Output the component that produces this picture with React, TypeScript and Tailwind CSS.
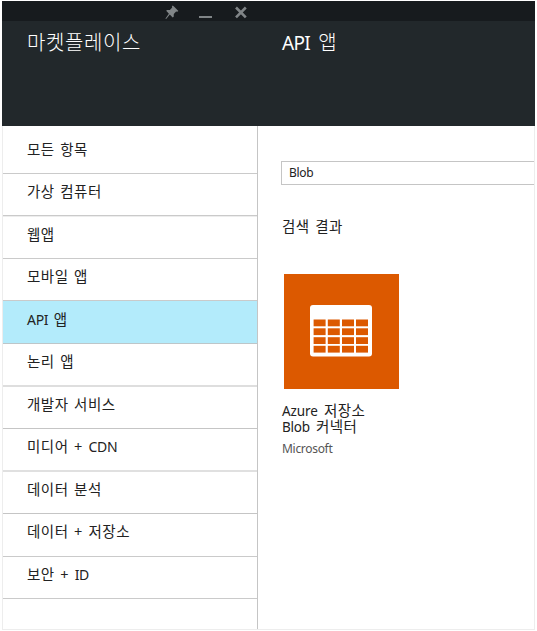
type MenuRow = { label: string; latin?: string; tail?: string; row: string };

const menu: MenuRow[] = [
  { label: '모든 항목', row: 'h-[48px] pt-[13px] border-b-[#cacaca]' },
  { label: '가상 컴퓨터', row: 'h-[42px] pt-[7px] border-b-[#cacaca]' },
  { label: '웹앱', row: 'h-[43px] pt-[7px] border-t border-t-[#ededed] border-b-[#cacaca]' },
  { label: '모바일 앱', row: 'h-[42px] pt-[7px] border-b-[#cacaca]' },
  { label: '', latin: 'API', tail: ' 앱', row: 'h-[43px] pt-[8px] bg-[#b3ebfb] border-b-[#bdc6c9]' },
  { label: '논리 앱', row: 'h-[42px] pt-[7px] border-b-[#dedede]' },
  { label: '개발자 서비스', row: 'h-[43px] pt-[7px] border-t border-t-[#dedede] border-b-[#c5c5c5]' },
  { label: '미디어 + ', latin: 'CDN', row: 'h-[42px] pt-[7px] border-b-[#e0e0e0]' },
  { label: '데이터 분석', row: 'h-[43px] pt-[7px] border-t border-t-[#e0e0e0] border-b-[#c5c5c5]' },
  { label: '데이터 + 저장소', row: 'h-[43px] pt-[7px] border-b-[#cacaca]' },
  { label: '보안 + ', latin: 'ID', row: 'h-[42px] pt-[7px] border-b-[#cacaca]' },
];

function WindowControls() {
  return (
    <div className="flex h-[20px] bg-[#171b1e] pl-[163px] text-[#808587]">
      <svg width="16" height="18" viewBox="0 0 16 18" fill="currentColor">
        <path d="M9.6 5 13.8 9.3 12.6 10 11.5 9.8 9.2 12.1 9.1 14.9 8.1 15.6 5.2 12.8 1.8 17 .7 17 4.3 12 1.6 9 2.4 8.2 5.3 8.1 7.6 5.8 7.3 4.7 8.1 3.7Z" transform="translate(-.4 .8)" />
      </svg>
      <svg className="ml-[18px]" width="13" height="18" viewBox="0 0 13 18">
        <path d="M0 15h13v2H0z" fill="currentColor" />
      </svg>
      <svg className="ml-[23px]" width="12" height="18" viewBox="0 0 12 18">
        <path d="M1 6.5 10.8 16.3M10.8 6.5 1 16.3" stroke="currentColor" strokeWidth="2.6" />
      </svg>
    </div>
  );
}

function TableIcon() {
  return (
    <svg className="mr-[2px] mb-[1px]" width="62" height="52" viewBox="0 0 62 52">
      <rect width="62" height="51.5" rx="3" fill="#fff" />
      {[14.5, 23.3, 32.2, 40.8].map((y) =>
        [3.6, 17.8, 32, 46].map((x) => (
          <rect key={`${x}-${y}`} x={x} y={y} width="12" height="6.8" fill="#dc5900" />
        )),
      )}
    </svg>
  );
}

export default function App() {
  return (
    <div className="h-[631px] w-[537px] bg-white pl-[2px] pt-px font-['Noto_Sans','Noto_Sans_CJK_KR',sans-serif] text-[#222]">
      <div className="flex h-[629px] w-[533px] flex-col">
        <header className="h-[125px] shrink-0 bg-[#22282b] text-white">
          <WindowControls />
          <div className="flex pt-[7px] text-[20px] leading-[30px] font-light">
            <h1 className="w-[254px] pl-[25px] tracking-[0.6px]">마켓플레이스</h1>
            <h2 className="pl-[26px] [word-spacing:3px]">
              <span className="text-[19px] font-normal tracking-[-0.7px]">API</span> 앱
            </h2>
          </div>
        </header>
        <main className="flex min-h-0 flex-1 border border-t-0 border-[#ededed]">
          <nav className="w-[255px] shrink-0 border-r border-[#c5c5c5]">
            {menu.map((item) => (
              <div
                key={item.label + item.latin}
                className={`border-b pl-[24px] text-[14.5px] leading-[20px] tracking-[0.5px] whitespace-pre [word-spacing:1.3px] ${item.row}`}
              >
                {item.label}
                {item.latin && <span className="text-[14px] tracking-[-0.3px]">{item.latin}</span>}
                {item.tail}
              </div>
            ))}
          </nav>
          <section className="min-w-0 flex-1 pl-[23px] pt-[35px]">
            <div className="h-[24px] border border-r-0 border-[#c5c5c5] pl-[7px] text-[12px] leading-[22px] tracking-[-0.3px]">
              Blob
            </div>
            <h3 className="mt-[31px] pl-px text-[14.5px] leading-[20px] tracking-[0.5px] [word-spacing:1.3px]">검색 결과</h3>
            <div className="ml-[3px] mt-[38px] flex h-[115px] w-[115px] items-center justify-center bg-[#dc5900]">
              <TableIcon />
            </div>
            <div className="mt-[13px] pl-px text-[14.5px] leading-[16px] tracking-[0.4px] [word-spacing:2px]">
              <div className="h-[16px]">
                <span className="text-[13.5px] tracking-[-0.1px]">Azure</span> 저장소
              </div>
              <div className="h-[16px]">
                <span className="text-[13.5px] tracking-[-0.2px]">Blob</span> 커넥터
              </div>
            </div>
            <div className="mt-[7px] pl-px text-[12px] leading-[16px] tracking-[-0.3px] text-[#555]">Microsoft</div>
          </section>
        </main>
      </div>
    </div>
  );
}
